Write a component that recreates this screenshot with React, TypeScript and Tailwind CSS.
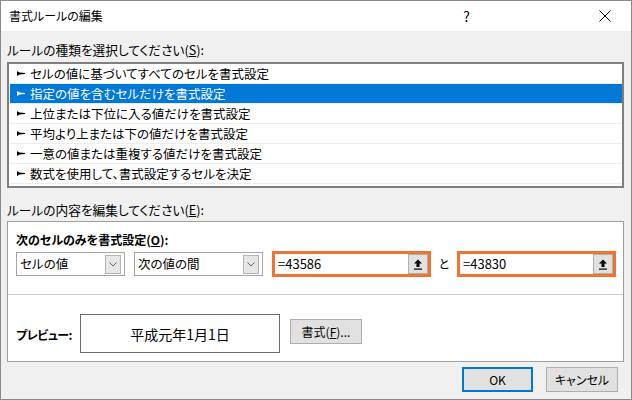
import React from 'react';

const rules = [
  'セルの値に基づいてすべてのセルを書式設定',
  '指定の値を含むセルだけを書式設定',
  '上位または下位に入る値だけを書式設定',
  '平均より上または下の値だけを書式設定',
  '一意の値または重複する値だけを書式設定',
  '数式を使用して、書式設定するセルを決定',
];

function Bullet({ color }: { color: string }) {
  return (
    <svg width="8" height="5" viewBox="0 0 8 5" className="shrink-0">
      <polygon points="0,0 2.5,1.6 8,2 8,3 2.5,3.4 0,5" fill={color} />
    </svg>
  );
}

function Chevron() {
  return (
    <svg width="8" height="5" viewBox="0 0 8 5">
      <polyline points="0.5,0.5 4,4 7.5,0.5" fill="none" stroke="#606060" strokeWidth="1" />
    </svg>
  );
}

function UploadIcon() {
  return (
    <svg width="10" height="11" viewBox="0 0 10 11">
      <path d="M5 0.5 L1 4.5 H3.5 V8 H6.5 V4.5 H9 Z" fill="#000" />
      <rect x="1" y="9.5" width="8" height="1.2" fill="#000" />
    </svg>
  );
}

function Dropdown({ label, width }: { label: string; width: string }) {
  return (
    <div className={`${width} h-[24px] border border-[#a6a6a6] bg-white flex items-center`}>
      <span className="pl-[3px] flex-1 text-[12.5px]">{label}</span>
      <div className="w-[16px] h-[19px] mr-[3px] bg-[#e6e6e6] border border-[#b4b4b4] flex items-center justify-center">
        <Chevron />
      </div>
    </div>
  );
}

function RefInput({ value }: { value: string }) {
  return (
    <div className="w-[159px] h-[26px] border-[3px] border-[#ee7430] bg-white flex items-stretch">
      <span className="flex-1 pl-[3px] flex items-center text-[13px]">{value}</span>
      <div className="w-[20px] bg-[#e1e1e1] border border-[#b0b0b0] flex items-center justify-center">
        <UploadIcon />
      </div>
    </div>
  );
}

export default function App() {
  return (
    <div className="w-[632px] h-[400px] border border-[#8a8a8a] bg-[#f0f0f0] flex flex-col text-[12px] leading-[16px] text-black font-['Noto_Sans_CJK_JP','Noto_Sans',sans-serif] [font-feature-settings:'palt']">
      {/* Title bar */}
      <div className="h-[30px] bg-white flex items-center pl-[8px] shrink-0">
        <span>書式ルールの編集</span>
        <span className="ml-auto text-[14px]">?</span>
        <svg width="12" height="12" viewBox="0 0 12 12" className="ml-[129px] mr-[20px]">
          <path d="M0.5 0.5 L11.5 11.5 M11.5 0.5 L0.5 11.5" stroke="#000" strokeWidth="1" />
        </svg>
      </div>

      <div className="flex-1 pl-[6px] pr-[7px] flex flex-col">
        <div className="mt-[11px] text-[12.7px]">
          ルールの種類を選択してください(<span className="underline">S</span>):
        </div>

        {/* Rule type list */}
        <div className="mt-[4px] h-[126px] border-2 border-[#7f7f7f] bg-white text-[12.5px]">
          {rules.map((r, i) => {
            const sel = i === 1;
            return (
              <div key={r} className="h-[20px] ml-[1px] border-b border-[#ededed] flex items-stretch">
                <div className={`flex-1 flex items-center pl-[7px] gap-[5px] ${sel ? 'bg-[#0078d7] text-white' : ''}`}>
                  <Bullet color={sel ? '#fff' : '#000'} />
                  <span>{r}</span>
                </div>
              </div>
            );
          })}
        </div>

        <div className="mt-[14px] text-[12.7px]">
          ルールの内容を編集してください(<span className="underline">E</span>):
        </div>

        {/* Rule description panel */}
        <div className="mt-[3px] h-[141px] border border-[#a0a0a0] bg-white flex flex-col">
          <div className="h-[73px] pl-[8px] pt-[10px] border-b border-[#cdcdcd]">
            <div className="font-bold">
              次のセルのみを書式設定(<span className="underline">O</span>):
            </div>
            <div className="mt-[3px] h-[26px] flex items-center">
              <Dropdown label="セルの値" width="w-[109px]" />
              <div className="w-[9px]" />
              <Dropdown label="次の値の間" width="w-[129px]" />
              <div className="w-[9px]" />
              <RefInput value="=43586" />
              <span className="w-[26px] text-center">と</span>
              <RefInput value="=43830" />
            </div>
          </div>
          <div className="flex-1 flex items-start pl-[8px] pt-[19px]">
            <span className="w-[64px] mt-[13px] font-bold tracking-[-0.5px]">プレビュー:</span>
            <div className="w-[200px] h-[39px] border border-[#6e6e6e] flex items-center justify-center text-[14px]">
              平成元年1月1日
            </div>
            <button className="ml-[10px] mt-[5px] w-[72px] h-[25px] bg-[#e1e1e1] border border-[#adadad] flex items-center justify-center">
              書式(<span className="underline">F</span>)...
            </button>
          </div>
        </div>

        {/* Footer buttons */}
        <div className="mt-[5px] flex justify-end pr-[6px] gap-[13px]">
          <button className="w-[71px] h-[25px] bg-[#e1e1e1] border-2 border-[#0078d7] flex items-center justify-center">
            OK
          </button>
          <button className="w-[72px] h-[25px] bg-[#e1e1e1] border border-[#adadad] flex items-center justify-center">
            キャンセル
          </button>
        </div>
      </div>
    </div>
  );
}
